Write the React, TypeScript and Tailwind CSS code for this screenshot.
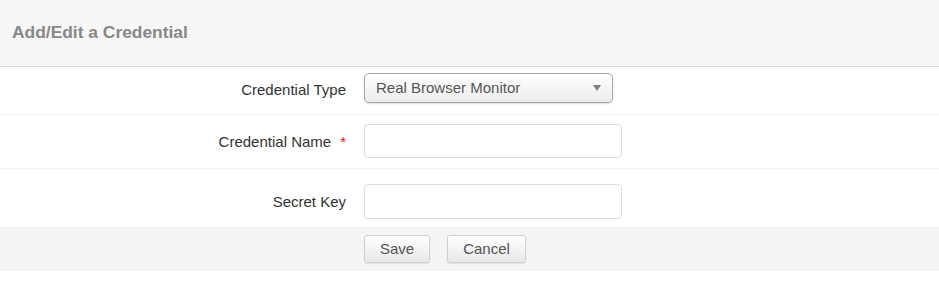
export default function App() {
  const font = "font-['Liberation_Sans',Arial,sans-serif]";

  return (
    <div className={`w-[939px] h-[297px] bg-white ${font}`}>
      <div className="h-[67px] bg-[#f6f6f6] border-b border-[#dcdcdc] flex items-center px-3">
        <h1 className="text-[17.4px] font-bold text-[#888] pb-[2px]">Add/Edit a Credential</h1>
      </div>

      <div className="h-[48px] border-b border-[#f0f0f0] flex pt-[6px]">
        <div className="w-[346px] h-[30px] pt-[4px] flex items-center justify-end text-[15px] text-[#333]">
          Credential Type
        </div>
        <div className="ml-[18px] w-[249px] h-[30px] rounded-[5px] border border-[#a8a8a8] bg-gradient-to-b from-white to-[#ececec] shadow-[0_1px_2px_rgba(0,0,0,0.15)] flex items-center justify-between pl-[11px] pr-[11px]">
          <span className="text-[15px] text-[#555] pt-[1px]">Real Browser Monitor</span>
          <svg width="8" height="6" viewBox="0 0 8 6">
            <path d="M0 0 L8 0 L4 6 Z" fill="#808080" />
          </svg>
        </div>
      </div>

      <div className="h-[54px] border-b border-[#f0f0f0] flex pt-[9px]">
        <div className="w-[346px] h-[34px] pt-[3px] flex items-center justify-end text-[15px] text-[#333]">
          Credential Name
          <span className="ml-[9px] text-[#ee1111]">*</span>
        </div>
        <input className="ml-[18px] w-[258px] h-[34px] rounded-[4px] border border-[#ddd] bg-white outline-none" />
      </div>

      <div className="h-[58px] flex pt-[15px]">
        <div className="w-[346px] h-[35px] pt-[1px] flex items-center justify-end text-[15px] text-[#333]">
          Secret Key
        </div>
        <input className="ml-[18px] w-[258px] h-[35px] rounded-[4px] border border-[#ddd] bg-white outline-none" />
      </div>

      <div className="h-[44px] bg-[#f4f4f4] flex items-center pl-[364px] gap-[17px]">
        <button className="w-[66px] h-[28px] pt-[1px] rounded-[3px] border border-[#cfcfcf] bg-gradient-to-b from-white to-[#e8e8e8] text-[15px] text-[#555] shadow-[0_1px_1px_rgba(0,0,0,0.08)]">
          Save
        </button>
        <button className="w-[79px] h-[28px] pt-[1px] rounded-[3px] border border-[#cfcfcf] bg-gradient-to-b from-white to-[#e8e8e8] text-[15px] text-[#555] shadow-[0_1px_1px_rgba(0,0,0,0.08)]">
          Cancel
        </button>
      </div>
    </div>
  );
}
